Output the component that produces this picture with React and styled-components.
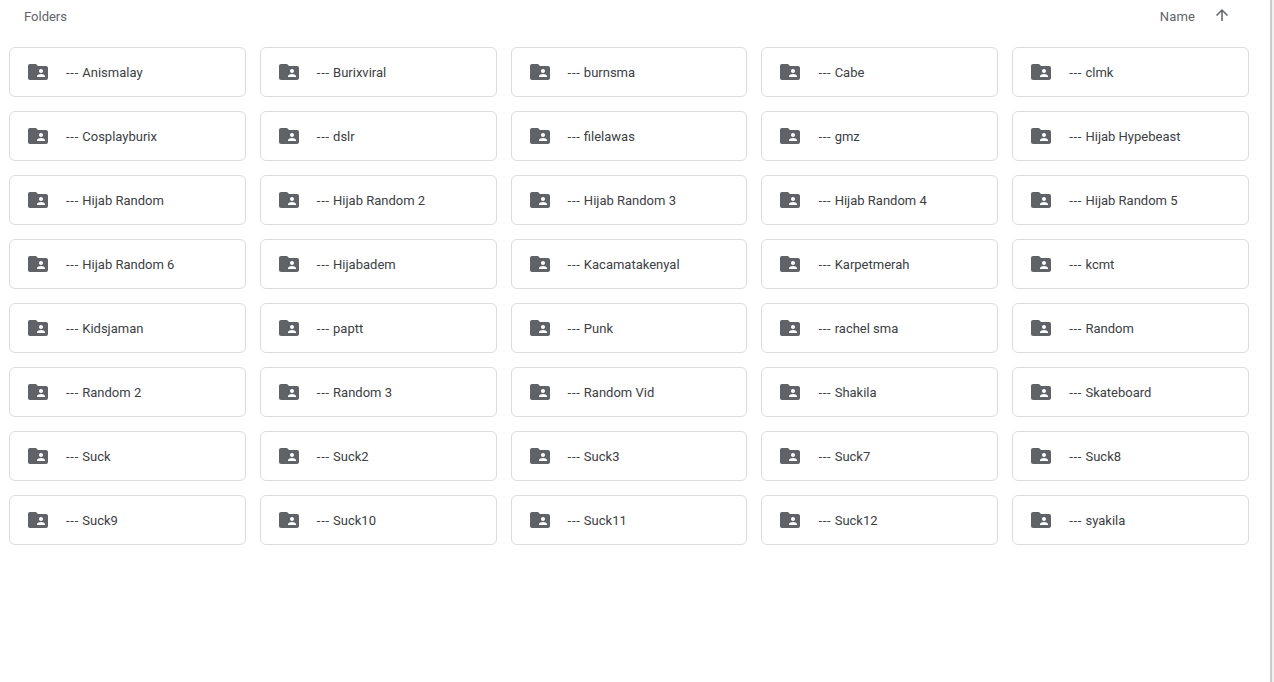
import React from 'react';
import styled, { createGlobalStyle } from 'styled-components';

const folders = [
  'Anismalay', 'Burixviral', 'burnsma', 'Cabe', 'clmk',
  'Cosplayburix', 'dslr', 'filelawas', 'gmz', 'Hijab Hypebeast',
  'Hijab Random', 'Hijab Random 2', 'Hijab Random 3', 'Hijab Random 4', 'Hijab Random 5',
  'Hijab Random 6', 'Hijabadem', 'Kacamatakenyal', 'Karpetmerah', 'kcmt',
  'Kidsjaman', 'paptt', 'Punk', 'rachel sma', 'Random',
  'Random 2', 'Random 3', 'Random Vid', 'Shakila', 'Skateboard',
  'Suck', 'Suck2', 'Suck3', 'Suck7', 'Suck8',
  'Suck9', 'Suck10', 'Suck11', 'Suck12', 'syakila',
];

const App = () => {
  return (
    <>
      <GlobalStyle />
      <Page>
        <Main>
          <Toolbar>
            <SectionTitle>Folders</SectionTitle>
            <SortControl>
              <SortLabel>Name</SortLabel>
              <SortButton>
                <svg width="18" height="18" viewBox="0 0 24 24" fill="#5f6368">
                  <path d="M4 12l1.41 1.41L11 7.83V20h2V7.83l5.58 5.59L20 12l-8-8-8 8z" />
                </svg>
              </SortButton>
            </SortControl>
          </Toolbar>
          <FolderGrid>
            {folders.map((name) => (
              <FolderCard key={name}>
                <IconWrapper>
                  <svg width="24" height="24" viewBox="0 0 24 24" fill="#5f6368">
                    <path d="M20 6h-8l-2-2H4c-1.1 0-1.99.9-1.99 2L2 18c0 1.1.9 2 2 2h16c1.1 0 2-.9 2-2V8c0-1.1-.9-2-2-2zm-5 3c1.1 0 2 .9 2 2s-.9 2-2 2-2-.9-2-2 .9-2 2-2zm4 8h-8v-1c0-1.33 2.67-2 4-2s4 .67 4 2v1z" />
                  </svg>
                </IconWrapper>
                <FolderName><Dashes>---</Dashes> {name}</FolderName>
              </FolderCard>
            ))}
          </FolderGrid>
        </Main>
        <ScrollTrack />
      </Page>
    </>
  );
};

const GlobalStyle = createGlobalStyle`
  html, body {
    margin: 0;
    padding: 0;
    height: 100%;
    overflow: hidden;
    background: #fff;
    font-family: Roboto, "Liberation Sans", sans-serif;
  }
`;

const Page = styled.div`
  display: flex;
  width: 1274px;
  height: 682px;
  overflow: hidden;
`;

const Main = styled.div`
  flex: 1 1 0;
  min-width: 0;
  padding: 0 21px 0 9px;
`;

const Toolbar = styled.div`
  display: flex;
  align-items: center;
  justify-content: space-between;
  height: 32px;
  margin-bottom: 15px;
  padding-left: 15px;
`;

const SectionTitle = styled.div`
  font-size: 13px;
  font-weight: 450;
  color: #5f6368;
`;

const SortControl = styled.div`
  display: flex;
  align-items: center;
  padding-right: 18px;
`;

const SortLabel = styled.span`
  font-size: 13px;
  font-weight: 450;
  letter-spacing: 0.15px;
  color: #5f6368;
  margin-right: 18px;
`;

const SortButton = styled.span`
  display: flex;
  width: 18px;
  height: 18px;
  margin-top: -2px;
`;

const FolderGrid = styled.div`
  display: grid;
  grid-template-columns: repeat(5, 1fr);
  column-gap: 14px;
  row-gap: 14px;
`;

const FolderCard = styled.div`
  display: flex;
  align-items: center;
  box-sizing: border-box;
  height: 50px;
  padding-left: 16px;
  background: #fff;
  border: 1px solid #dadce0;
  border-radius: 6px;
`;

const IconWrapper = styled.div`
  display: flex;
  width: 24px;
  height: 24px;
  margin-right: 16px;
`;

const FolderName = styled.div`
  font-size: 13px;
  font-weight: 450;
  color: #3c4043;
  white-space: nowrap;
`;

const Dashes = styled.span`
  letter-spacing: 0.75px;
`;

const ScrollTrack = styled.div`
  flex: 0 0 4px;
  box-sizing: border-box;
  background: #f1f1f1;
  border-left: 2px solid #cdcdcd;
`;

export default App;
